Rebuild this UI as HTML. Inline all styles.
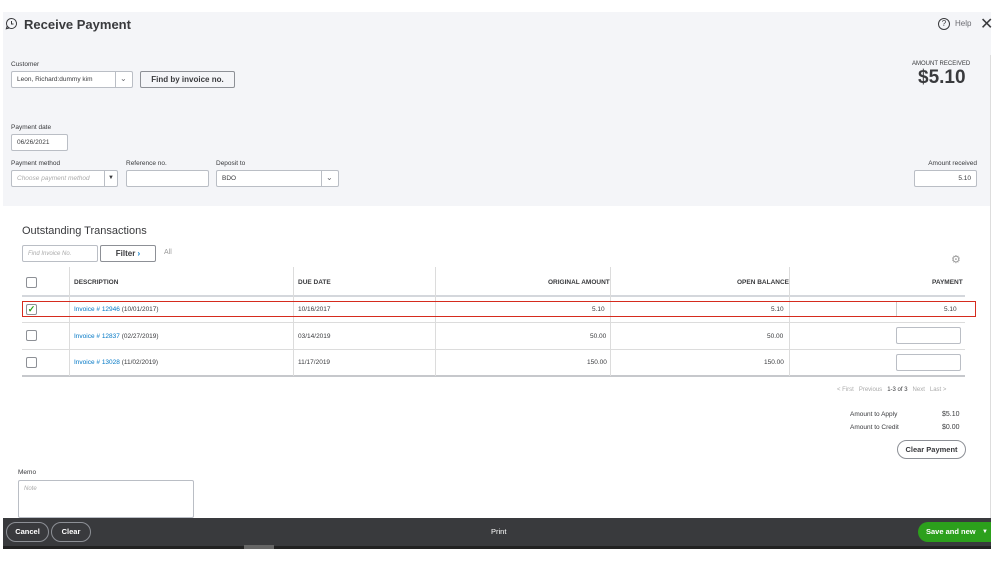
<!DOCTYPE html>
<html><head><style>
*{margin:0;padding:0;box-sizing:border-box}
body{width:999px;height:562px;background:#fff;font-family:"Liberation Sans",sans-serif;color:#393a3d;position:relative;overflow:hidden}
.a{position:absolute}
.lbl{font-size:6.5px;color:#393a3d}
.inp{position:absolute;background:#fff;border:1px solid #babec5;border-radius:2px;font-size:6.5px;padding-left:5px;display:flex;align-items:center}
.th{font-size:6.5px;font-weight:bold;color:#393a3d}
.td{font-size:6.5px;color:#393a3d}
.cb{position:absolute;width:11px;height:11px;border:1px solid #8d9096;border-radius:2px;background:#fff}
.vl{position:absolute;width:1px;background:#dcdcdc}
.hl{position:absolute;height:1px;background:#dcdcdc}
a{color:#0077c5;text-decoration:none}
</style></head><body>
<div class="a" style="left:3px;top:12px;width:988px;height:194px;background:#f4f5f8"></div>
<div class="a" style="left:990px;top:55px;width:1px;height:490px;background:#ddd"></div>
<svg class="a" style="left:5px;top:17px" width="13" height="13" viewBox="0 0 13 13"><path d="M6.5 1.5a5 5 0 1 1-4.3 7.5L1.3 11.8l3-0.8A5 5 0 0 1 6.5 1.5z" fill="none" stroke="#393a3d" stroke-width="1"/><path d="M6.5 4v3h2" fill="none" stroke="#393a3d" stroke-width="1"/></svg>
<div class="a" style="left:24px;top:17px;font-size:13px;font-weight:bold">Receive Payment</div>
<div class="a" style="left:938px;top:18px;width:12px;height:12px;border:1px solid #393a3d;border-radius:50%;font-size:8px;text-align:center;line-height:10px">?</div>
<div class="a" style="left:955px;top:19px;font-size:8px;color:#6b6c72">Help</div>
<div class="a" style="left:980px;top:14px;font-size:16px;color:#393a3d">✕</div>
<div class="a lbl" style="left:11px;top:61px">Customer</div>
<div class="inp" style="left:11px;top:71px;width:122px;height:17px">Leon, Richard:dummy kim</div>
<div class="a" style="left:115px;top:72px;width:1px;height:15px;background:#babec5"></div>
<div class="a" style="left:120px;top:74px;font-size:8px;color:#6b6c72">⌄</div>
<div class="a" style="left:140px;top:71px;width:95px;height:17px;border:1px solid #8d9096;border-radius:2px;font-size:8px;font-weight:bold;text-align:center;line-height:15px;background:#f4f5f8">Find by invoice no.</div>
<div class="a" style="left:912px;top:61px;font-size:6px;color:#393a3d">AMOUNT RECEIVED</div>
<div class="a" style="left:918px;top:67px;font-size:19px;font-weight:bold;color:#393a3d">$5.10</div>
<div class="a lbl" style="left:11px;top:124px">Payment date</div>
<div class="inp" style="left:11px;top:134px;width:57px;height:17px">06/26/2021</div>
<div class="a lbl" style="left:11px;top:160px">Payment method</div>
<div class="inp" style="left:11px;top:170px;width:107px;height:17px;color:#aaa;font-style:italic">Choose payment method</div>
<div class="a" style="left:104px;top:171px;width:1px;height:15px;background:#babec5"></div>
<div class="a" style="left:108px;top:175px;font-size:6px">▼</div>
<div class="a lbl" style="left:126px;top:160px">Reference no.</div>
<div class="inp" style="left:126px;top:170px;width:83px;height:17px"></div>
<div class="a lbl" style="left:216px;top:160px">Deposit to</div>
<div class="inp" style="left:216px;top:170px;width:123px;height:17px">BDO</div>
<div class="a" style="left:321px;top:171px;width:1px;height:15px;background:#babec5"></div>
<div class="a" style="left:326px;top:173px;font-size:8px;color:#6b6c72">⌄</div>
<div class="a lbl" style="left:900px;top:160px;width:77px;text-align:right">Amount received</div>
<div class="inp" style="left:914px;top:170px;width:63px;height:17px;justify-content:flex-end;padding-right:5px">5.10</div>

<div class="a" style="left:22px;top:225px;font-size:11px;color:#393a3d">Outstanding Transactions</div>
<div class="inp" style="left:22px;top:245px;width:76px;height:17px;color:#aaa;font-style:italic;font-size:6px">Find Invoice No.</div>
<div class="a" style="left:100px;top:245px;width:56px;height:17px;border:1px solid #8d9096;border-radius:2px;font-size:8px;font-weight:bold;text-align:center;line-height:15px">Filter <span style="color:#0077c5">›</span></div>
<div class="a" style="left:164px;top:249px;font-size:7px;color:#999">All</div>
<div class="a" style="left:951px;top:253px;font-size:11px;color:#999">⚙</div>

<div class="hl" style="left:22px;top:295px;width:943px;height:2px;background:#d4d7dc"></div>
<div class="hl" style="left:22px;top:322px;width:943px"></div>
<div class="hl" style="left:22px;top:349px;width:943px"></div>
<div class="hl" style="left:22px;top:375px;width:943px;height:2px;background:#c6c8cc"></div>
<div class="vl" style="left:69px;top:267px;height:109px"></div>
<div class="vl" style="left:293px;top:267px;height:109px"></div>
<div class="vl" style="left:435px;top:267px;height:109px"></div>
<div class="vl" style="left:610px;top:267px;height:109px"></div>
<div class="vl" style="left:789px;top:267px;height:109px"></div>
<div class="cb" style="left:26px;top:277px"></div>
<div class="a th" style="left:74px;top:279px">DESCRIPTION</div>
<div class="a th" style="left:298px;top:279px">DUE DATE</div>
<div class="a th" style="left:548px;top:279px">ORIGINAL AMOUNT</div>
<div class="a th" style="left:737px;top:279px">OPEN BALANCE</div>
<div class="a th" style="left:932px;top:279px">PAYMENT</div>

<div class="a" style="left:22px;top:301px;width:954px;height:16px;border:1px solid #d52b1e"></div>
<div class="cb" style="left:26px;top:304px;font-size:9px;color:#2ca01c;line-height:9px;text-align:center;font-weight:bold">✓</div>
<div class="a td" style="left:74px;top:306px"><a>Invoice # 12946</a> (10/01/2017)</div>
<div class="a td" style="left:298px;top:306px">10/16/2017</div>
<div class="a td" style="left:592px;top:306px">5.10</div>
<div class="a td" style="left:771px;top:306px">5.10</div>
<div class="a" style="left:896px;top:302px;width:1px;height:14px;background:#ccc"></div>
<div class="a td" style="left:944px;top:306px">5.10</div>

<div class="cb" style="left:26px;top:330px"></div>
<div class="a td" style="left:74px;top:333px"><a>Invoice # 12837</a> (02/27/2019)</div>
<div class="a td" style="left:298px;top:333px">03/14/2019</div>
<div class="a td" style="left:590px;top:333px">50.00</div>
<div class="a td" style="left:767px;top:333px">50.00</div>
<div class="inp" style="left:896px;top:327px;width:65px;height:17px"></div>

<div class="cb" style="left:26px;top:357px"></div>
<div class="a td" style="left:74px;top:359px"><a>Invoice # 13028</a> (11/02/2019)</div>
<div class="a td" style="left:298px;top:359px">11/17/2019</div>
<div class="a td" style="left:587px;top:359px">150.00</div>
<div class="a td" style="left:764px;top:359px">150.00</div>
<div class="inp" style="left:896px;top:354px;width:65px;height:17px"></div>

<div class="a" style="left:837px;top:387px;font-size:6px;color:#aaa">&lt; First &nbsp; Previous &nbsp; <span style="color:#393a3d">1-3 of 3</span> &nbsp; Next &nbsp; Last &gt;</div>
<div class="a" style="left:850px;top:411px;font-size:6.5px">Amount to Apply</div>
<div class="a" style="left:942px;top:411px;font-size:7px">$5.10</div>
<div class="a" style="left:850px;top:424px;font-size:6.5px">Amount to Credit</div>
<div class="a" style="left:942px;top:424px;font-size:7px">$0.00</div>
<div class="a" style="left:897px;top:440px;width:69px;height:19px;border:1px solid #8d9096;border-radius:10px;font-size:7.5px;font-weight:bold;text-align:center;line-height:17px">Clear Payment</div>

<div class="a lbl" style="left:18px;top:469px">Memo</div>
<div class="inp" style="left:18px;top:480px;width:176px;height:38px;align-items:flex-start;padding-top:5px;color:#aaa;font-style:italic;font-size:6px">Note</div>

<div class="a" style="left:3px;top:518px;width:988px;height:31px;background:#393a3d"></div>
<div class="a" style="left:3px;top:546px;width:988px;height:3px;background:#222"></div>
<div class="a" style="left:244px;top:545px;width:30px;height:4px;background:#666"></div>
<div class="a" style="left:6px;top:522px;width:43px;height:20px;border:1px solid #8d9096;border-radius:10px;color:#fff;font-size:7.5px;font-weight:bold;text-align:center;line-height:18px">Cancel</div>
<div class="a" style="left:51px;top:522px;width:40px;height:20px;border:1px solid #8d9096;border-radius:10px;color:#fff;font-size:7.5px;font-weight:bold;text-align:center;line-height:18px">Clear</div>
<div class="a" style="left:491px;top:527px;font-size:7.5px;color:#fff">Print</div>
<div class="a" style="left:918px;top:522px;width:73px;height:20px;background:#2ca01c;border-radius:10px 0 0 10px;color:#fff;font-size:7.5px;font-weight:bold;line-height:20px;padding-left:8px">Save and new <span style="position:absolute;left:64px;font-size:6px">▼</span></div>
</body></html>
